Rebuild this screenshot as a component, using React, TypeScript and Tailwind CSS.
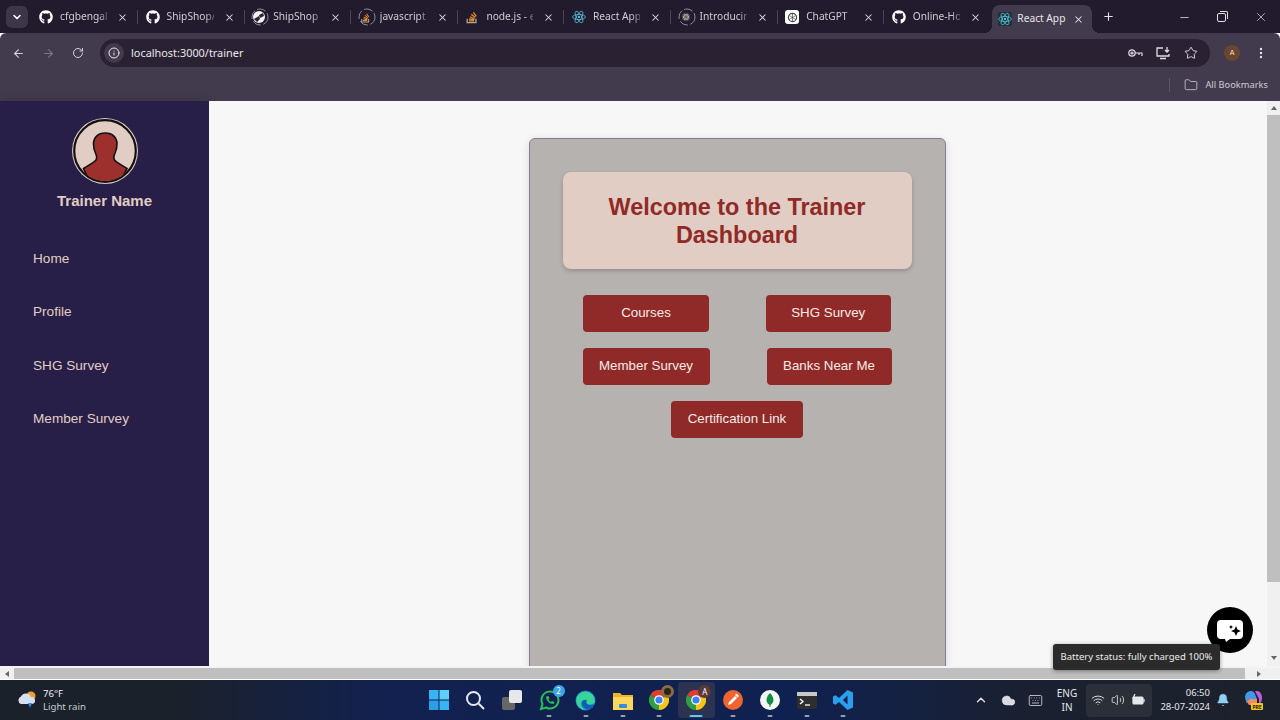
import React from "react";
import { FaGithub } from "react-icons/fa";
import { ChevronDown, ArrowLeft, ArrowRight, RotateCw, Info, X, Plus, Minus, Star, Folder, EllipsisVertical, ChevronUp, Bell, Wifi, Volume2, Keyboard, Cloud } from "lucide-react";

const ReactLogo = ({ s = 14 }: { s?: number }) => (
  <svg width={s} height={s} viewBox="-12 -12 24 24" fill="none" stroke="#58c4dc" strokeWidth="1.3">
    <circle r="2" fill="#58c4dc" stroke="none" />
    <ellipse rx="11" ry="4.4" />
    <ellipse rx="11" ry="4.4" transform="rotate(60)" />
    <ellipse rx="11" ry="4.4" transform="rotate(120)" />
  </svg>
);
const Ring = ({ children }: { children: React.ReactNode }) => (
  <div className="relative flex h-[16px] w-[16px] items-center justify-center">
    <svg width="18" height="18" viewBox="0 0 18 18" className="absolute -left-[1px] -top-[1px]" fill="none" stroke="#8f8a99" strokeWidth="1" strokeDasharray="9 2.5"><circle cx="9" cy="9" r="8" /></svg>
    {children}
  </div>
);
const SO = ({ s = 12 }: { s?: number }) => (
  <svg width={s} height={s} viewBox="0 0 16 16" fill="none"><path d="M2.5 10v4.5h10V10" stroke="#b7a58f" strokeWidth="1.5" /><path d="M4.5 12.5h6M4.7 10.3l5.9 1M5.5 7.7l5.5 2.4M7.2 5l4.6 3.6M9.6 2.6l3.3 4.7" stroke="#e48a32" strokeWidth="1.5" /></svg>
);
const Gpt = ({ s = 11, bg = "none" }: { s?: number; bg?: string }) => (
  <svg width={s} height={s} viewBox="0 0 16 16" fill={bg} stroke="#444" strokeWidth="1.6"><circle cx="8" cy="8" r="6" /><path d="M8 2v12M3 5l10 6M13 5L3 11" strokeWidth="1" /></svg>
);
const ShipLogo = () => (
  <svg width="12" height="12" viewBox="0 0 12 12"><circle cx="6" cy="6" r="6" fill="#f0f0f0" /><path d="M1 8l5-3 1 3-3 3zM6 4l4-2 1 3-4 2z" fill="#2a2233" /></svg>
);

const tabs: { title: string; icon: React.ReactNode }[] = [
  { title: "cfgbengal", icon: <FaGithub className="text-[14px] text-white" /> },
  { title: "ShipShop/", icon: <FaGithub className="text-[14px] text-white" /> },
  { title: "ShipShop", icon: <Ring><ShipLogo /></Ring> },
  { title: "javascript", icon: <Ring><SO s={11} /></Ring> },
  { title: "node.js - e", icon: <SO s={14} /> },
  { title: "React App", icon: <ReactLogo /> },
  { title: "Introducin", icon: <Ring><Gpt s={10} bg="#aaa" /></Ring> },
  { title: "ChatGPT", icon: <div className="flex h-[14px] w-[14px] items-center justify-center rounded-[3px] bg-white"><Gpt /></div> },
  { title: "Online-Ho", icon: <FaGithub className="text-[14px] text-white" /> },
];

const Tab = ({ title, icon, last }: { title: string; icon: React.ReactNode; last?: boolean }) => (
  <div className="flex h-[34px] w-[106.6px] shrink-0 items-center pl-[7px]">
    <div className="flex w-[14px] shrink-0 items-center justify-center">{icon}</div>
    <div className="ml-[7px] w-[47px] whitespace-nowrap text-[10.2px] text-[#cfccd4] [mask-image:linear-gradient(90deg,#000_82%,rgba(0,0,0,0.35))]">{title}</div>
    <X size={11} strokeWidth={2.2} className="ml-[10px] shrink-0 text-[#dcdae0]" />
    {!last && <div className="ml-[9px] h-[14px] w-px shrink-0 bg-[#4a4453]" />}
  </div>
);

const TbIcon = ({ children, dot = true, active }: { children: React.ReactNode; dot?: boolean; active?: boolean }) => (
  <div className={`relative flex h-[36.6px] w-[36.8px] shrink-0 items-center justify-center rounded-[4px] ${active ? "bg-[#2b3350]" : ""}`}>
    {children}
    {dot && <div className={`absolute bottom-[1px] left-1/2 h-[2px] -translate-x-1/2 rounded-full ${active ? "w-[13px] bg-[#5cc8f5]" : "w-[5px] bg-[#9aa0ad]"}`} />}
  </div>
);

const Chrome = ({ badge }: { badge: React.ReactNode }) => (
  <div className="relative h-[20px] w-[20px]">
    <svg width="20" height="20" viewBox="0 0 20 20">
      <path d="M10 10L1.3 5A10 10 0 0 1 18.7 5Z" fill="#e33b2e" />
      <path d="M10 10L18.7 5A10 10 0 0 1 10 20Z" fill="#f5c518" />
      <path d="M10 10L10 20A10 10 0 0 1 1.3 5Z" fill="#2f9e44" />
      <circle cx="10" cy="10" r="4.8" fill="#fff" />
      <circle cx="10" cy="10" r="3.6" fill="#3b82f6" />
    </svg>
    {badge}
  </div>
);

const Nav = ({ children }: { children: React.ReactNode }) => (
  <div className="h-[53.3px] pl-[33px] text-[13.6px] leading-[53.3px] text-[#e2cdc4]">{children}</div>
);
const Btn = ({ children, w }: { children: React.ReactNode; w: string }) => (
  <div className={`flex h-[37px] items-center justify-center rounded-[4px] bg-[#902a28] pb-[1px] text-[13.33px] text-[#f6ebe6] ${w}`}>{children}</div>
);

export default function App() {
  return (
    <div className="relative flex h-[720px] w-[1280px] flex-col overflow-hidden font-['Liberation_Sans',Arial,sans-serif]">
      {/* tab strip */}
      <div className="flex h-[33px] shrink-0 items-start bg-[#221b2d] font-['Noto_Sans','Liberation_Sans',sans-serif]">
        <div className="ml-[6px] mt-[6px] flex h-[22px] w-[22px] shrink-0 items-center justify-center rounded-[6px] bg-[#3d3647]"><ChevronDown size={12} strokeWidth={3} className="text-white" /></div>
        <div className="ml-[4px] flex">
          {tabs.map((t, i) => <Tab key={i} title={t.title} icon={t.icon} last={i === 8} />)}
        </div>
        <div className="relative ml-[1px] mt-[5px] flex h-[28px] w-[100px] shrink-0 items-center rounded-t-[8px] bg-[#423a4d] pl-[6px] before:absolute before:-left-[8px] before:bottom-0 before:h-[8px] before:w-[8px] before:bg-[radial-gradient(circle_at_0_0,transparent_8px,#423a4d_8px)] after:absolute after:-right-[8px] after:bottom-0 after:h-[8px] after:w-[8px] after:bg-[radial-gradient(circle_at_100%_0,transparent_8px,#423a4d_8px)]">
          <div className="rounded-[2px] bg-[#20303a]"><ReactLogo /></div>
          <span className="ml-[5px] whitespace-nowrap text-[10.2px] text-[#e9e7ec]">React App</span>
          <X size={11} strokeWidth={2.2} className="ml-auto mr-[8px] text-[#e9e7ec]" />
        </div>
        <Plus size={13} strokeWidth={2} className="ml-[10px] mt-[10px] shrink-0 text-[#e4e2e8]" />
        <div className="ml-auto mr-[12px] mt-[10px] flex items-center text-[#e4e2e8]">
          <Minus size={13} strokeWidth={1.4} />
          <div className="relative ml-[26px] h-[9px] w-[9px] rounded-[2px] border border-[#e4e2e8] after:absolute after:-right-[3px] after:-top-[3px] after:h-[8px] after:w-[8px] after:rounded-tr-[2px] after:border-r after:border-t after:border-[#e4e2e8]" />
          <X size={14} strokeWidth={1.2} className="ml-[28px]" />
        </div>
      </div>
      {/* toolbar */}
      <div className="flex h-[39px] shrink-0 items-center rounded-t-[6px] bg-[#423a4d] pl-[12px] pr-[11px] pt-[1px] text-[#d5d2da]">
        <ArrowLeft size={13} strokeWidth={2} />
        <ArrowRight size={13} strokeWidth={2} className="ml-[17px] text-[#7d7787]" />
        <RotateCw size={12} strokeWidth={2} className="ml-[17px]" />
        <div className="ml-[16px] flex h-[28px] w-[1110px] shrink-0 items-center rounded-full bg-[#2a2233] pl-[4px]">
          <div className="flex h-[20px] w-[20px] items-center justify-center rounded-full bg-[#423a4d]"><Info size={12} strokeWidth={2} className="text-[#ece9f0]" /></div>
          <span className="ml-[7px] font-['Noto_Sans',sans-serif] text-[10.9px] text-[#e9e7ec]">localhost:3000/trainer</span>
          <div className="ml-auto mr-[12px] flex items-center gap-[13px]">
            <svg width="15" height="10" viewBox="0 0 15 10" fill="none" stroke="#e0dde4" strokeWidth="1.2"><circle cx="4" cy="5" r="3.2" /><circle cx="4" cy="5" r="1" /><path d="M7 5h7v3M11 5v2" /></svg>
            <svg width="15" height="14" viewBox="0 0 15 14" fill="none" stroke="#e0dde4" strokeWidth="1.3"><path d="M7 2H1v8h12V8M4 12.5h6M11 1v5M9 4l2 2 2-2" /></svg>
            <Star size={14} strokeWidth={1.6} className="text-[#e0dde4]" />
          </div>
        </div>
        <div className="ml-[14px] flex h-[16px] w-[16px] shrink-0 items-center justify-center rounded-full bg-[#6b4530] text-[7px] text-[#f0e5dc]">A</div>
        <EllipsisVertical size={14} strokeWidth={2.2} className="ml-[14px] shrink-0 text-[#e0dde4]" />
      </div>
      {/* bookmarks */}
      <div className="flex h-[29px] shrink-0 items-center justify-end bg-[#423a4d] pb-[4px] pr-[12px] font-['Noto_Sans',sans-serif]">
        <div className="mr-[14px] h-[14px] w-px bg-[#5b5366]" />
        <Folder size={14} strokeWidth={1.3} className="text-[#d8d5dd]" />
        <span className="ml-[7px] text-[9.3px] text-[#cfccd4]">All Bookmarks</span>
      </div>
      {/* page */}
      <div className="flex h-[565px] shrink-0">
        <aside className="flex w-[209px] shrink-0 flex-col overflow-hidden bg-[#271f47] shadow-[2px_0_8px_rgba(0,0,0,0.15)]">
          <div className="mt-[17px] flex flex-col items-center">
            <svg width="66" height="66" viewBox="0 0 66 66">
              <circle cx="33" cy="33" r="33" fill="#e2cdc4" />
              <circle cx="33" cy="33" r="30.8" fill="#e2cdc4" stroke="#111" strokeWidth="2.2" />
              <clipPath id="av"><circle cx="33" cy="33" r="30" /></clipPath>
              <path clipPath="url(#av)" d="M33 15c-7 0-11.500 4.500-11.500 11 0 4 .8 7 2.300 10 1 2 1.200 4 .2 6-2 2.500-8 5.500-12.500 8.500L16 60l17 5 17-5 5-9.500c-4.500-3-10.500-6-12.500-8.500-1-2-.8-4 .2-6 1.500-3 2.300-6 2.300-10 0-6.500-4.500-11-11.500-11z" fill="#9d2f2c" stroke="#111" strokeWidth="1.6" />
            </svg>
            <div className="mt-[7px] text-[15px] font-bold leading-[20px] text-[#e2cdc4]">Trainer Name</div>
          </div>
          <nav className="mt-[21px] flex flex-col">
            <Nav>Home</Nav>
            <Nav>Profile</Nav>
            <Nav>SHG Survey</Nav>
            <Nav>Member Survey</Nav>
          </nav>
        </aside>
        <main className="flex min-w-0 flex-1 justify-center overflow-hidden bg-[#f7f7f7] pr-[2px] pt-[37px]">
          <div className="flex h-[700px] w-[417px] shrink-0 flex-col rounded-[6px] border border-[#837c96] bg-[#b6b2af] px-[33px] pt-[33px] shadow-[0_2px_8px_rgba(0,0,0,0.12)]">
            <div className="flex h-[97px] shrink-0 items-center justify-center rounded-[8px] bg-[#e2cdc4] px-[20px] text-center text-[23.4px] font-bold leading-[28px] text-[#902a28] shadow-[0_2px_4px_rgba(0,0,0,0.2)]">
              Welcome to the Trainer Dashboard
            </div>
            <div className="mt-[26px] flex flex-col items-center gap-[16px]">
              <div className="flex gap-[57px]"><Btn w="w-[125.500px]">Courses</Btn><Btn w="w-[125px]">SHG Survey</Btn></div>
              <div className="flex gap-[57px]"><Btn w="w-[127px]">Member Survey</Btn><Btn w="w-[125px]">Banks Near Me</Btn></div>
              <div className="flex"><Btn w="w-[132px]">Certification Link</Btn></div>
            </div>
          </div>
        </main>
        <div className="flex w-[13px] shrink-0 flex-col items-center bg-[#f0f0f0]">
          <div className="mt-[5px] h-0 w-0 border-x-[3.5px] border-b-[4px] border-x-transparent border-b-[#666]" />
          <div className="mt-[5px] h-[467px] w-full bg-[#bfbfbf]" />
          <div className="mb-[6px] mt-auto h-0 w-0 border-x-[3.5px] border-t-[4px] border-x-transparent border-t-[#666]" />
        </div>
      </div>
      {/* h scrollbar */}
      <div className="flex h-[14px] shrink-0 items-center border-b border-t-2 border-b-white border-t-[#f4f4f4] bg-[#f0f0f0]">
        <div className="ml-[5px] h-0 w-0 border-y-[3.5px] border-r-[4px] border-y-transparent border-r-[#666]" />
        <div className="ml-[5px] h-full w-[1231px] bg-[#bfbfbf]" />
        <div className="ml-[12px] h-0 w-0 border-y-[3.5px] border-l-[4px] border-y-transparent border-l-[#666]" />
      </div>
      {/* taskbar */}
      <div className="relative flex h-[40px] shrink-0 items-center justify-center bg-[linear-gradient(90deg,#1b212b_0%,#1b212b_14%,#12214f_30%,#0f2150_62%,#1a2030_80%,#1c212b_100%)] font-['Noto_Sans',sans-serif]">
        <div className="absolute left-[16px] top-0 flex h-full items-center">
          <svg width="22" height="20" viewBox="0 0 22 20"><circle cx="15" cy="6" r="4.500" fill="#f2a033" /><path d="M5 14a4 4 0 0 1 0-7.500 5.500 5.500 0 0 1 10 .5 3.500 3.500 0 0 1 1 7z" fill="#d5e0f0" /><path d="M12 13h4l-2 5z" fill="#2f8ce8" /></svg>
          <div className="ml-[5px] flex flex-col text-[9.6px] leading-[13.500px]">
            <span className="text-[#eef0f3]">76°F</span>
            <span className="text-[#c8ccd4]">Light rain</span>
          </div>
        </div>
        <div className="ml-[2px] flex items-center">
          <TbIcon dot={false}>
            <svg width="20" height="20" viewBox="0 0 20 20" fill="#36b5f2"><rect width="9.500" height="9.500" /><rect x="10.500" width="9.500" height="9.500" fill="#5cd0fb" /><rect y="10.500" width="9.500" height="9.500" fill="#2a9fe6" /><rect x="10.500" y="10.500" width="9.500" height="9.500" fill="#36b5f2" /></svg>
          </TbIcon>
          <TbIcon dot={false}>
            <svg width="20" height="20" viewBox="0 0 20 20" fill="none" stroke="#e6e8ec" strokeWidth="2"><circle cx="8.500" cy="8.500" r="6.500" /><path d="M13.500 13.500L19 19" /></svg>
          </TbIcon>
          <TbIcon dot={false}>
            <div className="relative h-[20px] w-[20px]"><div className="absolute bottom-0 left-0 h-[13px] w-[13px] rounded-[2px] bg-[#666]" /><div className="absolute right-0 top-0 h-[13px] w-[13px] rounded-[2px] bg-[#e8e8e8]" /></div>
          </TbIcon>
          <TbIcon>
            <div className="relative">
              <svg width="21" height="21" viewBox="0 0 21 21" fill="none"><path d="M2 19l1.500-5A8.500 8.500 0 1 1 7 17.500z" stroke="#25c05a" strokeWidth="2" /><path d="M7 6.500c0 4 3.500 7.500 7.500 7.500l1-2-2.500-1-1 1c-1-.5-2-1.500-2.500-2.500l1-1-1-2.500z" fill="#25c05a" /></svg>
              <div className="absolute -right-[5px] -top-[5px] flex h-[12px] w-[12px] items-center justify-center rounded-full bg-[#3aa5e8] text-[8px] leading-none text-white">2</div>
            </div>
          </TbIcon>
          <TbIcon>
            <svg width="21" height="21" viewBox="0 0 21 21"><circle cx="10.500" cy="10.500" r="10" fill="#1a7fd4" /><path d="M1 11a9.500 9.500 0 0 1 19 0c0 2-2 3.500-5 3.500-3 0-4-1-4-2.500 0-1 .5-1.500 1-2-3-1-6 1-6 4 0 2.500 2 5 5 6A10 10 0 0 1 1 11z" fill="#38d49a" /><path d="M7 12c0 4 3 7 6.500 7.500 3-1 5-3 6-5-3 1.500-7 1-8-1.500-.5-1 0-2 .5-2.500-2-.5-5 0-5 1.500z" fill="#0d5fb0" /></svg>
          </TbIcon>
          <TbIcon>
            <svg width="20" height="19" viewBox="0 0 20 19"><path d="M0 2h7l2 2h11v15H0z" fill="#f0b429" /><path d="M0 6h20v13H0z" fill="#fbd75b" /><rect x="6" y="13" width="8" height="4" rx="1" fill="#2f8ce8" /></svg>
          </TbIcon>
          <TbIcon>
            <Chrome badge={<div className="absolute -right-[5px] -top-[5px] h-[13px] w-[13px] rounded-full bg-[#8a6b45] after:absolute after:left-[3px] after:top-[3px] after:h-[7px] after:w-[7px] after:rounded-full after:bg-[#2c2218]" />} />
          </TbIcon>
          <TbIcon active>
            <Chrome badge={<div className="absolute -right-[5px] -top-[5px] flex h-[13px] w-[13px] items-center justify-center rounded-full bg-[#5a3a3a] text-[8px] leading-none text-white">A</div>} />
          </TbIcon>
          <TbIcon>
            <svg width="20" height="20" viewBox="0 0 20 20"><circle cx="10" cy="10" r="10" fill="#f0642f" /><path d="M5 15l1-3 6-6 2 2-6 6zM12 5l1.500-1.500 2.500 2.500L14.500 7.500z" fill="#fff" /></svg>
          </TbIcon>
          <TbIcon>
            <svg width="20" height="20" viewBox="0 0 20 20"><circle cx="10" cy="10" r="10" fill="#f4f6f4" /><path d="M10 3c2.500 2.500 3.500 5 3.500 7s-1.500 4-3 5v2h-1v-2c-1.500-1-3-3-3-5s1-4.500 3.500-7z" fill="#13894a" /></svg>
          </TbIcon>
          <TbIcon>
            <svg width="20" height="17" viewBox="0 0 20 17"><rect width="20" height="17" rx="1.500" fill="#2e2e2e" /><rect width="20" height="4" fill="#c8c8c8" /><path d="M3 7l3 2.500-3 2.500" stroke="#fff" strokeWidth="1.300" fill="none" /><path d="M8 13h5" stroke="#fff" strokeWidth="1.300" /></svg>
          </TbIcon>
          <TbIcon>
            <svg width="20" height="20" viewBox="0 0 20 20"><path d="M14.500 0L20 2.500v15L14.500 20 6 12l-3.500 2.700L0 13.500v-7L2.500 5.300 6 8zM14.500 5.500L10 10l4.500 4.500z" fill="#2b9fec" /></svg>
          </TbIcon>
        </div>
        <div className="absolute right-[17px] top-0 flex h-full items-center text-[#e6e8ec]">
          <ChevronUp size={14} strokeWidth={2.2} />
          <Cloud size={15} fill="#d8dbe0" strokeWidth={1} className="ml-[13px]" />
          <Keyboard size={15} strokeWidth={1.2} className="ml-[12px]" />
          <div className="ml-[13px] flex w-[22px] flex-col items-center text-[10px] leading-[14px]"><span>ENG</span><span>IN</span></div>
          <div className="ml-[8px] flex h-[33px] w-[66px] items-center justify-center gap-[6px] rounded-[4px] bg-[#2a2f38] pr-[2px]">
            <Wifi size={14} strokeWidth={1.6} />
            <Volume2 size={14} strokeWidth={1.4} />
            <svg width="14" height="12" viewBox="0 0 14 12" fill="none" stroke="#e6e8ec" strokeWidth="1.2"><rect x="2" y="3" width="10" height="7" rx="1" fill="#e6e8ec" /><path d="M13 5v3M4 0L2 4h3L3 7" /></svg>
          </div>
          <div className="ml-[6px] flex w-[52px] flex-col items-end text-[9.500px] leading-[14px]"><span>06:50</span><span>28-07-2024</span></div>
          <Bell size={14} fill="#8fd0f5" strokeWidth={1} className="ml-[6px] text-[#8fd0f5]" />
          <svg width="20" height="20" viewBox="0 0 20 20" className="ml-[13px]"><path d="M2 8c0-5 3-7 6-7 2 0 3 1 4 3l2 5H7c-2 0-3 2-3 5z" fill="#3f9be8" /><path d="M12 1h2c3 0 5 3 5 7 0 3-1 5-3 6V9z" fill="#c05ce0" /><path d="M4 12c0-2 2-3 3-3h7v6H6z" fill="#f08a6a" /><rect x="8" y="13" width="12" height="7" rx="1" fill="#f5c518" /><text x="14" y="18.500" fontSize="5" fontWeight="700" textAnchor="middle" fill="#1a1a1a">PRE</text></svg>
        </div>
      </div>
      {/* overlays */}
      <div className="absolute left-[1207px] top-[607px] flex h-[46px] w-[46px] items-center justify-center rounded-full bg-black">
        <svg width="28" height="25" viewBox="0 0 28 25"><path d="M5 2h18a4 4 0 0 1 4 4v11a4 4 0 0 1-4 4H14l-4 3-1-3H5a4 4 0 0 1-4-4V6a4 4 0 0 1 4-4z" fill="#fff" /><path d="M20 8l1.500 3.500L25 13l-3.500 1.500L20 18l-1.500-3.500L15 13l3.500-1.500z" fill="#000" /><path d="M15 7l.7 1.300L17 9l-1.300.7L15 11l-.7-1.300L13 9l1.300-.7z" fill="#000" /></svg>
      </div>
      <div className="absolute left-[1053px] top-[644px] flex h-[26px] w-[167px] items-center justify-center rounded-[3px] bg-[#2b2b2b] font-['Noto_Sans',sans-serif] text-[9.500px] text-[#ececec] shadow-[0_1px_4px_rgba(0,0,0,0.4)]">
        Battery status: fully charged 100%
      </div>
    </div>
  );
}
